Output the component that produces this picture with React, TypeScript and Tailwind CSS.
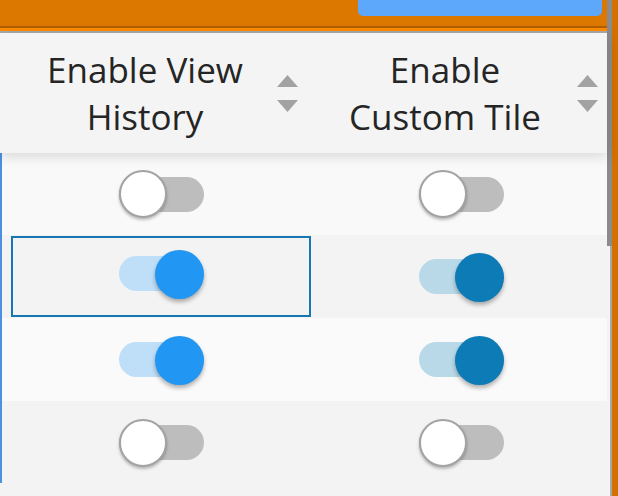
import React from "react";

type ToggleProps = { on: boolean; thumb: string; track: string };

function Toggle({ on, thumb, track }: ToggleProps) {
  return (
    <div className="relative w-[85px] h-[48px] flex items-center">
      <div className={`w-[85px] h-[35px] rounded-full ${on ? track : "bg-[#bdbdbd]"}`} />
      {on ? (
        <div
          className={`absolute right-0 top-0 w-[49px] h-[49px] rounded-full ${thumb} shadow-[0_3px_4px_rgba(0,0,0,0.3)]`}
        />
      ) : (
        <div className="absolute left-0 top-0 w-[48px] h-[48px] rounded-full bg-white border-2 border-[#a3a3a3] shadow-[0_2px_3px_rgba(0,0,0,0.25)]" />
      )}
    </div>
  );
}

function SortArrows() {
  return (
    <div className="flex flex-col gap-[13px] w-[21px] shrink-0">
      <svg width="21" height="12" viewBox="0 0 21 12">
        <polygon points="10.5,0 21,12 0,12" fill="#a2a2a2" />
      </svg>
      <svg width="21" height="12" viewBox="0 0 21 12">
        <polygon points="0,0 21,0 10.5,12" fill="#a2a2a2" />
      </svg>
    </div>
  );
}

const rows = [
  { on: false, bg: "bg-[#f9f9f9]", h: "h-[82px]" },
  { on: true, bg: "bg-[#f3f3f3]", h: "h-[83px]", focus: true },
  { on: true, bg: "bg-[#fafafa]", h: "h-[83px]" },
  { on: false, bg: "bg-[#f3f3f3]", h: "h-[83px]" },
];

export default function App() {
  return (
    <div
      className="w-[618px] h-[496px] overflow-hidden flex bg-[#f3f3f3]"
      style={{ fontFamily: '"Open Sans", "Noto Sans", sans-serif' }}
    >
      {/* main */}
      <div className="w-[607px] flex flex-col">
        {/* top bar */}
        <div className="h-[33px] flex flex-col shrink-0">
          <div className="h-[26px] bg-[#dc7800] flex justify-end pr-[5px]">
            <div className="w-[244px] h-[16px] bg-[#5ea8fc] rounded-b-[5px]" />
          </div>
          <div className="h-[2px] bg-[#b05e00]" />
          <div className="h-[3px] bg-[#ff8b00]" />
          <div className="h-[2px] bg-[#a9a9a9]" />
        </div>
        {/* header */}
        <div className="relative z-10 h-[120px] shrink-0 flex bg-[#f4f4f4] text-[#252525] text-[35px] leading-[47px] shadow-[0_3px_12px_rgba(0,0,0,0.14)]">
          <div className="w-[311px] flex items-center pl-[13px] pr-[13px]">
            <div className="flex-1 text-center">
              Enable View
              <br />
              History
            </div>
            <SortArrows />
          </div>
          <div className="flex-1 flex items-center pl-[2px] pr-[9px]">
            <div className="flex-1 text-center">
              Enable
              <br />
              Custom Tile
            </div>
            <SortArrows />
          </div>
        </div>
        {/* body */}
        <div className="flex-1 flex">
          <div className="w-[2px] flex flex-col">
            <div className="h-[330px] bg-[#4d8fe0]" />
          </div>
          <div className="flex-1 flex flex-col">
            {rows.map((r, i) => (
              <div key={i} className={`${r.h} ${r.bg} flex shrink-0`}>
                <div className="w-[9px]" />
                <div
                  className={`w-[300px] flex items-center justify-center ${
                    r.focus ? "border-2 border-[#1677b2] my-px pb-[6px]" : ""
                  }`}
                >
                  <Toggle on={r.on} thumb="bg-[#2196f3]" track="bg-[#bfdef8]" />
                </div>
                <div className="flex-1 flex items-center justify-center pl-[5px]">
                  <Toggle on={r.on} thumb="bg-[#0c7bb6]" track="bg-[#b9d9e9]" />
                </div>
              </div>
            ))}
          </div>
        </div>
      </div>
      {/* scrollbar */}
      <div className="w-[5px] flex flex-col">
        <div className="h-[246px] bg-[#8b8b8b]" />
        <div className="flex-1 flex">
          <div className="w-[3px] bg-[#f3f3f3]" />
          <div className="w-[2px] bg-[#a8a8a8]" />
        </div>
      </div>
      {/* orange right edge */}
      <div className="w-[6px] bg-[#d27000]" />
    </div>
  );
}
